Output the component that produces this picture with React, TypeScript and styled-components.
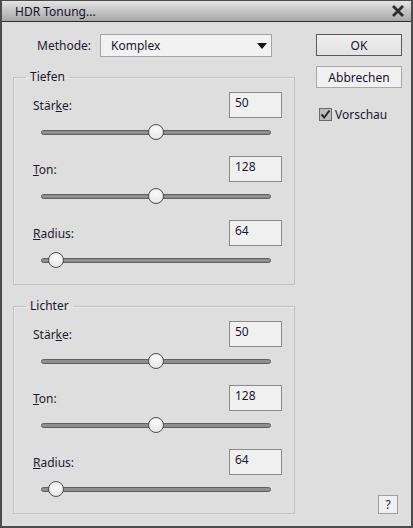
import React, { useState } from 'react';
import styled, { createGlobalStyle } from 'styled-components';

const GlobalStyle = createGlobalStyle`
  html, body {
    margin: 0;
    padding: 0;
    background: #dedede;
  }
  * {
    box-sizing: border-box;
  }
`;

// Window frame
const Window = styled.div`
  width: 413px;
  height: 528px;
  display: flex;
  flex-direction: column;
  background-color: #dedede;
  border: 2px solid #4c4c4c;
  border-top: 1px solid #4c4c4c;
  font-family: "Noto Sans", "Open Sans", sans-serif;
  font-size: 12px;
  color: #1c1c1c;
`;

const TitleBar = styled.div`
  height: 21px;
  flex: none;
  display: flex;
  align-items: center;
  justify-content: space-between;
  padding: 0 6px 0 13px;
  background: linear-gradient(#e4e4e4, #a6a6a6);
  border-bottom: 1px solid #2c2c2c;
`;

const Title = styled.span`
  font-size: 12px;
  color: #14122a;
`;

const CloseButton = styled.button`
  border: none;
  background: none;
  padding: 0;
  width: 14px;
  height: 14px;
  display: flex;
  align-items: center;
  justify-content: center;
  cursor: pointer;
`;

const Body = styled.div`
  flex: 1;
  display: flex;
  gap: 21px;
  padding: 12px 9px 18px 11px;
`;

const LeftColumn = styled.div`
  width: 282px;
  display: flex;
  flex-direction: column;
`;

const MethodRow = styled.div`
  display: flex;
  align-items: center;
  gap: 9px;
  padding-left: 24px;
  height: 23px;
  margin-bottom: 12px;
`;

const Label = styled.label`
  font-size: 12px;
  color: #1c1a30;
`;

const Select = styled.div`
  width: 172px;
  height: 23px;
  display: flex;
  align-items: center;
  justify-content: space-between;
  padding: 0 4px 0 10px;
  background: #f2f2f2;
  border: 1px solid #a4a4a4;
  font-size: 12px;
  color: #1a1630;
`;

const Group = styled.fieldset<{ $gap?: number }>`
  margin: 0 0 ${(p) => p.$gap ?? 0}px 0;
  padding: 7px 12px 10px 19px;
  border: 1px solid #c2c2c2;
  box-shadow: inset 1px 1px 0 #ececec;
  display: flex;
  flex-direction: column;
  gap: 10px;
  min-width: 0;
`;

const Legend = styled.legend`
  padding: 0 4px;
  margin-left: -7px;
  font-size: 12px;
  line-height: 16px;
  color: #1a1630;
`;

const SliderRow = styled.div`
  display: flex;
  flex-direction: column;
`;

const RowHeader = styled.div`
  display: flex;
  align-items: center;
  justify-content: space-between;
  height: 26px;
`;

const Key = styled.span`
  text-decoration: underline;
`;

const NumberBox = styled.input`
  width: 53px;
  height: 26px;
  padding: 0 0 6px 5px;
  background: #f0f0f0;
  border: 1px solid #8a8a8a;
  font-family: inherit;
  font-size: 12px;
  color: #1a1630;
  outline: none;
`;

const SliderWrap = styled.div`
  height: 28px;
  display: flex;
  align-items: center;
  padding: 0 11px 0 8px;
`;

const Track = styled.div`
  position: relative;
  width: 100%;
  height: 5px;
  border-radius: 3px;
  background: #8e8e8e;
  border: 1px solid #5e5e5e;
`;

const Thumb = styled.div`
  position: absolute;
  top: 50%;
  width: 16px;
  height: 16px;
  margin-left: -8px;
  margin-top: -8px;
  border-radius: 50%;
  background: radial-gradient(circle at 50% 35%, #fafafa, #e2e2e2);
  border: 1px solid #4e4e4e;
`;

const RightColumn = styled.div`
  width: 86px;
  display: flex;
  flex-direction: column;
  gap: 10px;
`;

const Button = styled.button<{ $primary?: boolean }>`
  height: 22px;
  width: 100%;
  padding: 0;
  font-family: inherit;
  font-size: 12px;
  color: #161230;
  background: ${(p) => (p.$primary ? 'linear-gradient(#efefef, #e2e2e2)' : '#f0f0f0')};
  border: 1px solid ${(p) => (p.$primary ? '#5a5a5a' : '#a8a8a8')};
  cursor: pointer;
`;

const CheckRow = styled.label`
  display: flex;
  align-items: center;
  gap: 3px;
  margin-top: 8px;
  padding-left: 3px;
  font-size: 12px;
  color: #1a1630;
`;

const CheckBox = styled.span`
  width: 13px;
  height: 13px;
  display: flex;
  align-items: center;
  justify-content: center;
  background: #bdbdbd;
  border: 1px solid #6a6a6a;
`;

const HelpButton = styled.button`
  margin-top: auto;
  align-self: flex-end;
  margin-right: 4px;
  width: 20px;
  height: 19px;
  padding: 0;
  font-family: inherit;
  font-size: 12px;
  color: #2a2050;
  background: #efefef;
  border: 1px solid #a0a0a0;
`;

type SliderProps = { label: string; hotkey: number; value: number; pos: number };

const Slider: React.FC<SliderProps> = ({ label, hotkey, value, pos }) => (
  <SliderRow>
    <RowHeader>
      <Label>
        {label.slice(0, hotkey)}
        <Key>{label[hotkey]}</Key>
        {label.slice(hotkey + 1)}:
      </Label>
      <NumberBox defaultValue={value} />
    </RowHeader>
    <SliderWrap>
      <Track>
        <Thumb style={{ left: `${pos}%` }} />
      </Track>
    </SliderWrap>
  </SliderRow>
);

const sliders = [
  { label: 'Stärke', hotkey: 4, value: 50, pos: 50 },
  { label: 'Ton', hotkey: 0, value: 128, pos: 50 },
  { label: 'Radius', hotkey: 0, value: 64, pos: 6 },
];

const App: React.FC = () => {
  const [preview] = useState(true);

  return (
    <>
      <GlobalStyle />
      <Window>
        <TitleBar>
          <Title>HDR Tonung...</Title>
          <CloseButton>
            <svg width="12" height="12" viewBox="0 0 12 12">
              <path d="M2 2L10 10M10 2L2 10" stroke="#2e2e2e" strokeWidth="2.8" strokeLinecap="square" />
            </svg>
          </CloseButton>
        </TitleBar>
        <Body>
          <LeftColumn>
            <MethodRow>
              <Label>Methode:</Label>
              <Select>
                Komplex
                <svg width="10" height="6" viewBox="0 0 10 6">
                  <path d="M0 0H10L5 6Z" fill="#111" />
                </svg>
              </Select>
            </MethodRow>
            <Group $gap={13}>
              <Legend>Tiefen</Legend>
              {sliders.map((s) => (
                <Slider key={s.label} {...s} />
              ))}
            </Group>
            <Group>
              <Legend>Lichter</Legend>
              {sliders.map((s) => (
                <Slider key={s.label} {...s} />
              ))}
            </Group>
          </LeftColumn>
          <RightColumn>
            <Button $primary>OK</Button>
            <Button>Abbrechen</Button>
            <CheckRow>
              <CheckBox>
                {preview && (
                  <svg width="11" height="11" viewBox="0 0 11 11">
                    <path d="M1.5 5.5L4.2 8.5L9.5 1.5" stroke="#2a2a2a" strokeWidth="2" fill="none" />
                  </svg>
                )}
              </CheckBox>
              Vorschau
            </CheckRow>
            <HelpButton>?</HelpButton>
          </RightColumn>
        </Body>
      </Window>
    </>
  );
};

export default App;
